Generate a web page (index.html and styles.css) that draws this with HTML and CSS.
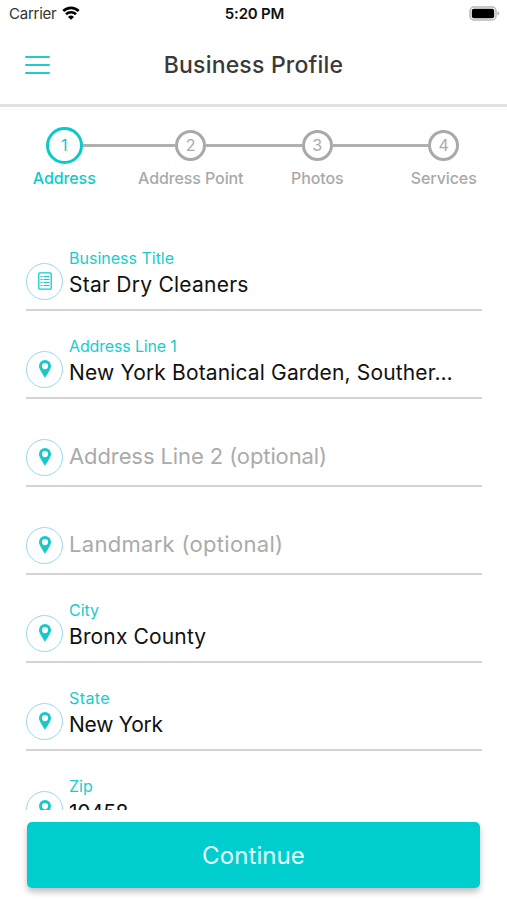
FILE: index.html
```html
<!DOCTYPE html>
<html lang="en">
<head>
  <meta charset="UTF-8">
  <meta name="viewport" content="width=device-width, initial-scale=1.0">
  <title>Business Profile</title>
  <link rel="stylesheet" href="styles.css">
</head>
<body>

  <!-- Shared icons -->
  <svg class="icon-defs" width="0" height="0">
    <symbol id="pin" viewBox="0 0 12 18">
      <path fill-rule="evenodd" d="M6 0a6 6 0 0 1 6 6c0 3.600-4 8-6 12C4 14 0 9.600 0 6a6 6 0 0 1 6-6zm0 3a3.100 3.100 0 1 0 0 6.200A3.100 3.100 0 0 0 6 3z"/>
    </symbol>
  </svg>

  <!-- Status bar -->
  <div class="status-bar">
    <div class="carrier">
      <span>Carrier</span>
      <svg class="wifi" viewBox="0 0 18 14" width="18" height="14">
        <path d="M1.300 5a11 11 0 0 1 15.400 0M4 8.300a7.200 7.200 0 0 1 10 0" fill="none" stroke="#000" stroke-width="2.600"/>
        <path d="M9 13.800L6 10.900a4.300 4.300 0 0 1 6 0z"/>
      </svg>
    </div>
    <span class="time">5:20 PM</span>
    <svg class="battery" viewBox="0 0 31 15" width="31" height="15">
      <rect x="1" y="1" width="26" height="13" rx="4" fill="#fff" stroke="#b8b8b8" stroke-width="1.500"/>
      <rect x="2.800" y="2.800" width="22.400" height="9.400" rx="2"/>
      <path d="M28.500 5.500c2.400.8 2.400 3.200 0 4z" fill="#b0b0b0"/>
    </svg>
  </div>

  <!-- Header -->
  <header class="header">
    <button class="menu-btn" aria-label="Menu"><i></i><i></i><i></i></button>
    <h1>Business Profile</h1>
  </header>

  <!-- Steps -->
  <div class="steps">
    <div class="step active">
      <div class="track"><span class="circle">1</span></div>
      <p>Address</p>
    </div>
    <div class="step">
      <div class="track"><span class="circle">2</span></div>
      <p>Address Point</p>
    </div>
    <div class="step">
      <div class="track"><span class="circle">3</span></div>
      <p>Photos</p>
    </div>
    <div class="step">
      <div class="track"><span class="circle">4</span></div>
      <p>Services</p>
    </div>
  </div>

  <!-- Address form -->
  <main class="form">
    <div class="field">
      <span class="icon">
        <svg viewBox="0 0 14 18" width="14" height="18" fill="none" stroke="#16c9c9">
          <rect x=".8" y=".8" width="12.400" height="16.400" rx="1" stroke-width="1.300"/>
          <path d="M2.500 4.500h2M5.500 4.500h6M2.500 7.500h2M5.500 7.500h6M2.500 10.500h2M5.500 10.500h6M2.500 13.500h2M5.500 13.500h6"/>
        </svg>
      </span>
      <div class="text">
        <label>Business Title</label>
        <div class="value title">Star Dry Cleaners</div>
      </div>
    </div>
    <div class="field">
      <span class="icon"><svg class="pin"><use href="#pin"/></svg></span>
      <div class="text">
        <label class="line-label">Address Line 1</label>
        <div class="value">New York Botanical Garden, Souther…</div>
      </div>
    </div>
    <div class="field">
      <span class="icon"><svg class="pin"><use href="#pin"/></svg></span>
      <div class="text">
        <div class="value placeholder">Address Line 2 (optional)</div>
      </div>
    </div>
    <div class="field">
      <span class="icon"><svg class="pin"><use href="#pin"/></svg></span>
      <div class="text">
        <div class="value placeholder landmark">Landmark (optional)</div>
      </div>
    </div>
    <div class="field">
      <span class="icon"><svg class="pin"><use href="#pin"/></svg></span>
      <div class="text">
        <label>City</label>
        <div class="value">Bronx County</div>
      </div>
    </div>
    <div class="field">
      <span class="icon"><svg class="pin"><use href="#pin"/></svg></span>
      <div class="text">
        <label class="state-label">State</label>
        <div class="value state">New York</div>
      </div>
    </div>
    <div class="field">
      <span class="icon"><svg class="pin"><use href="#pin"/></svg></span>
      <div class="text">
        <label>Zip</label>
        <div class="value zip">10458</div>
      </div>
    </div>
  </main>

  <footer class="footer">
    <button class="continue-btn">Continue</button>
  </footer>

</body>
</html>
```

FILE: styles.css
```css
* {
  box-sizing: border-box;
}

body {
  margin: 0;
  height: 900px;
  overflow: hidden;
  display: flex;
  flex-direction: column;
  background-color: #fff;
  color: #111;
  font-family: Inter, "Open Sans", sans-serif;
}

h1,
p {
  margin: 0;
}

button {
  border: none;
  padding: 0;
  font-family: inherit;
  cursor: pointer;
}

.icon-defs {
  position: absolute;
}

/* Status bar */
.status-bar {
  height: 27px;
  flex: none;
  display: grid;
  grid-template-columns: 1fr auto 1fr;
  align-items: center;
  padding: 0 7px 0 9px;
  font-size: 15px;
}

.carrier {
  display: flex;
  align-items: center;
  gap: 6px;
  color: #333;
  letter-spacing: -0.25px;
}

.wifi {
  margin-top: -2px;
}

.time {
  font-weight: 600;
  color: #111;
  letter-spacing: -0.2px;
}

.battery {
  justify-self: end;
}

/* Header */
.header {
  height: 80px;
  flex: none;
  display: grid;
  grid-template-columns: 1fr auto 1fr;
  align-items: center;
  padding: 0 25px 1px;
  border-bottom: 3px solid #e2e2e2;
}

.menu-btn {
  width: 25px;
  display: flex;
  flex-direction: column;
  gap: 6px;
  background: none;
}

.menu-btn i {
  height: 2px;
  border-radius: 1px;
  background-color: #22cccc;
}

.header h1 {
  font-size: 23px;
  line-height: 30px;
  font-weight: 500;
  letter-spacing: 0.2px;
  color: #3a3a3a;
}

/* Steps */
.steps {
  height: 116px;
  flex: none;
  display: flex;
  padding: 20px 0 0 1px;
}

.step {
  width: 126.500px;
  text-align: center;
  color: #a9a9a9;
}

.track {
  height: 37px;
  display: flex;
  align-items: center;
}

.track::before,
.track::after {
  content: "";
  flex: 1;
  height: 2.500px;
  background-color: #b0b0b0;
}

.step:first-child .track::before,
.step:last-child .track::after {
  background: none;
}

.circle {
  width: 31px;
  height: 31px;
  border: 3px solid #a9a9a9;
  border-radius: 50%;
  font-size: 16px;
  line-height: 25px;
}

.step p {
  margin-top: 4px;
  font-size: 16px;
  line-height: 20px;
  font-weight: 500;
  letter-spacing: -0.1px;
  white-space: nowrap;
}

.step.active {
  color: #12c9c9;
}

.active .circle {
  width: 37px;
  height: 37px;
  border-color: #0cc9c9;
  line-height: 31px;
}

/* Fields */
.form {
  height: 587px;
  flex: none;
  overflow: hidden;
  padding: 0 25px 0 26px;
}

.field {
  height: 88px;
  display: flex;
  gap: 6px;
  border-bottom: 2px solid #d4d4d4;
}

.icon {
  width: 37px;
  height: 37px;
  margin-top: 39.500px;
  flex: none;
  display: flex;
  align-items: center;
  justify-content: center;
  border: 1.500px solid #9ad8ee;
  border-radius: 50%;
}

.pin {
  width: 12px;
  height: 18px;
  fill: #16c9c9;
}

.text {
  flex: 1;
  min-width: 0;
  padding-top: 25px;
  white-space: nowrap;
}

.text label {
  display: block;
  height: 20px;
  font-size: 16px;
  line-height: 20px;
  color: #16cdcd;
}

.text .line-label {
  letter-spacing: -0.15px;
}

.text .state-label {
  letter-spacing: 0.4px;
}

.value {
  margin-top: 2px;
  font-size: 21px;
  line-height: 30px;
  letter-spacing: 0.15px;
}

.title {
  letter-spacing: 0.25px;
}

.state {
  letter-spacing: -0.25px;
}

.zip {
  letter-spacing: -0.4px;
}

.placeholder {
  margin-top: 17px;
  font-size: 22px;
  letter-spacing: -0.1px;
  color: #ababab;
}

.landmark {
  letter-spacing: 0.3px;
}

/* Continue button */
.footer {
  padding: 12px 27px;
}

.continue-btn {
  width: 453px;
  height: 66px;
  display: block;
  border-radius: 5px;
  background-color: #00cece;
  box-shadow: 0 4px 6px rgba(0, 0, 0, 0.25);
  color: #e6ffff;
  font-size: 24px;
  letter-spacing: 0.1px;
}
```
